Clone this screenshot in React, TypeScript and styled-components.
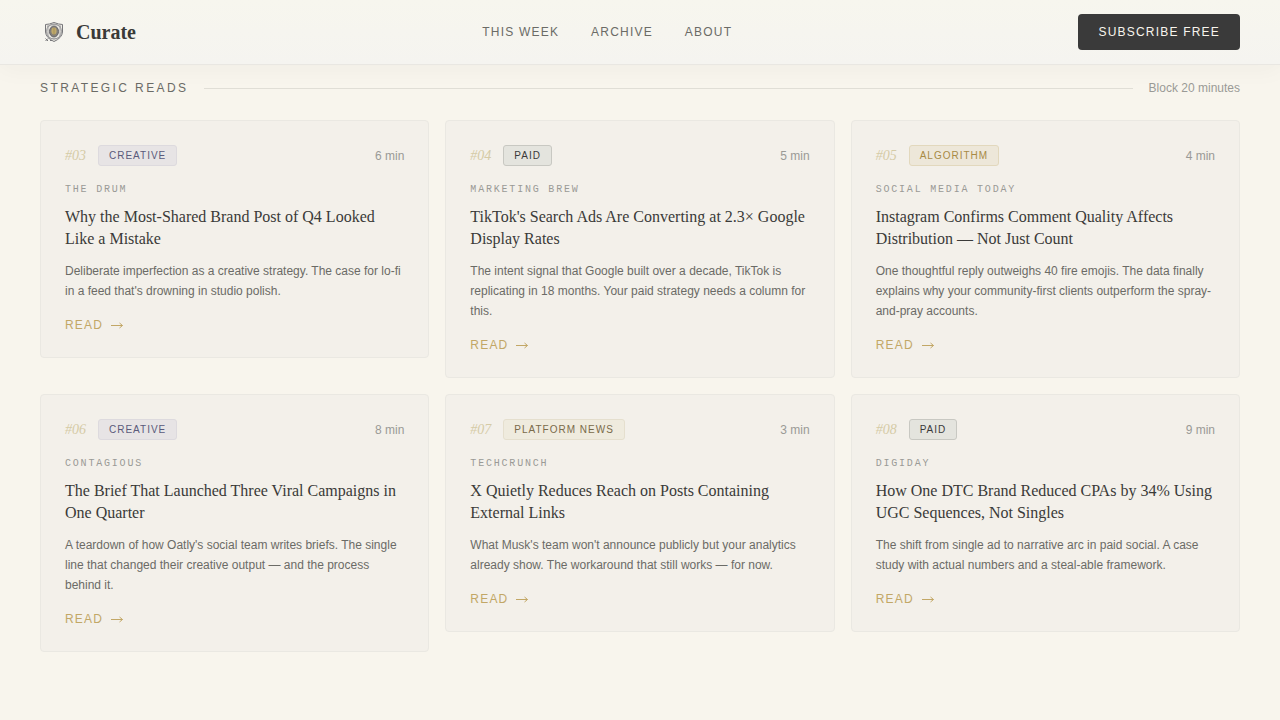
import React from 'react';
import styled, { createGlobalStyle } from 'styled-components';

const sans = '"Liberation Sans", Arial, sans-serif';
const serif = '"Liberation Serif", "Times New Roman", serif';
const mono = '"Liberation Mono", "Courier New", monospace';

const GlobalStyle = createGlobalStyle`
  *, *::before, *::after { box-sizing: border-box; }
  body {
    margin: 0;
    background: #f8f5ed;
    color: #3a3a3a;
    font-family: ${sans};
  }
  h1, h2, h3, p { margin: 0; }
`;

const Header = styled.header`
  position: sticky;
  top: 0;
  z-index: 1;
  display: flex;
  align-items: center;
  justify-content: space-between;
  padding: 14px 40px;
  background: linear-gradient(180deg, #f7f6ee, #f5f4f0);
  border-bottom: 1px solid #e9e7e2;
  box-shadow: 0 4px 24px rgba(58, 58, 58, 0.04);
`;

const Brand = styled.a`
  display: flex;
  align-items: center;
  gap: 8px;
  color: #3a3a38;
  font: bold 20px/28px ${serif};
  text-decoration: none;
`;

const Emblem = styled.svg`
  width: 28px;
  height: 28px;
`;

const Nav = styled.nav`
  display: flex;
  gap: 32px;
`;

const NavLink = styled.a`
  color: #6b6b66;
  font-size: 12px;
  line-height: 16px;
  letter-spacing: 0.1em;
  text-transform: uppercase;
  text-decoration: none;
`;

const SubscribeButton = styled.button`
  padding: 10px 20px;
  border: 0;
  border-radius: 4px;
  background: #3a3a3a;
  color: #f8f5ed;
  font: 12px/16px ${sans};
  letter-spacing: 0.1em;
  text-transform: uppercase;
  cursor: pointer;
`;

const Section = styled.main`
  padding: 15px 40px 64px;
`;

const SectionHeader = styled.div`
  display: flex;
  align-items: center;
  gap: 16px;
  margin-bottom: 24px;
`;

const SectionTitle = styled.h2`
  color: #6b6b66;
  font-size: 12px;
  font-weight: 400;
  line-height: 16px;
  letter-spacing: 0.2em;
  text-transform: uppercase;
`;

const Rule = styled.div`
  flex: 1;
  height: 1px;
  background: #e0ded6;
`;

const Muted = styled.span`
  color: #9a9a96;
  font-size: 12px;
  line-height: 16px;
`;

const Grid = styled.div`
  display: grid;
  grid-template-columns: repeat(3, minmax(0, 1fr));
  align-items: start;
  gap: 16px;
`;

const Card = styled.article`
  padding: 24px;
  background: #f3f0ea;
  border: 1px solid #eae8e2;
  border-radius: 4px;
`;

const CardMeta = styled.div`
  display: flex;
  align-items: center;
  gap: 12px;
  margin-bottom: 16px;
`;

const Rank = styled.span`
  color: #d5cba6;
  font: italic 14px/20px ${serif};
`;

type Tone = 'creative' | 'paid' | 'algorithm' | 'platform';

const tones: Record<Tone, { text: string; fill: string; edge: string }> = {
  creative: { text: '#5a5a7a', fill: '#e7e4e5', edge: '#dddade' },
  paid: { text: '#3a3a3a', fill: '#e4e4de', edge: '#c8c8c2' },
  algorithm: { text: '#a88a45', fill: '#ede7d9', edge: '#e2d8bd' },
  platform: { text: '#7a6a4a', fill: '#efebde', edge: '#e5dfce' },
};

const Badge = styled.span<{ $tone: Tone }>`
  padding: 2px 10px;
  border: 1px solid ${(p) => tones[p.$tone].edge};
  border-radius: 3px;
  background: ${(p) => tones[p.$tone].fill};
  color: ${(p) => tones[p.$tone].text};
  font-size: 10px;
  line-height: 15px;
  letter-spacing: 0.1em;
  text-transform: uppercase;
`;

const Duration = styled(Muted)`
  margin-left: auto;
`;

const Source = styled.p`
  margin-bottom: 8px;
  color: #9a9a96;
  font: 10px/16px ${mono};
  letter-spacing: 0.18em;
  text-transform: uppercase;
`;

const Title = styled.h3`
  margin-bottom: 11px;
  color: #3a3a38;
  font: 400 16px/22px ${serif};
`;

const Summary = styled.p`
  margin-bottom: 16px;
  color: #6b6b66;
  font-size: 12px;
  line-height: 20px;
`;

const ReadLink = styled.a`
  display: flex;
  align-items: center;
  gap: 8px;
  color: #c2a766;
  font-size: 12px;
  line-height: 16px;
  letter-spacing: 0.1em;
  text-transform: uppercase;
  text-decoration: none;
`;

const ArrowIcon = styled.svg`
  width: 12px;
  height: 8px;
`;

interface Article {
  rank: string;
  tone: Tone;
  tag: string;
  minutes: number;
  source: string;
  title: string;
  summary: string;
}

const articles: Article[] = [
  {
    rank: '#03', tone: 'creative', tag: 'Creative', minutes: 6, source: 'The Drum',
    title: 'Why the Most-Shared Brand Post of Q4 Looked Like a Mistake',
    summary: "Deliberate imperfection as a creative strategy. The case for lo-fi in a feed that's drowning in studio polish.",
  },
  {
    rank: '#04', tone: 'paid', tag: 'Paid', minutes: 5, source: 'Marketing Brew',
    title: "TikTok's Search Ads Are Converting at 2.3× Google Display Rates",
    summary: 'The intent signal that Google built over a decade, TikTok is replicating in 18 months. Your paid strategy needs a column for this.',
  },
  {
    rank: '#05', tone: 'algorithm', tag: 'Algorithm', minutes: 4, source: 'Social Media Today',
    title: 'Instagram Confirms Comment Quality Affects Distribution — Not Just Count',
    summary: 'One thoughtful reply outweighs 40 fire emojis. The data finally explains why your community-first clients outperform the spray-and-pray accounts.',
  },
  {
    rank: '#06', tone: 'creative', tag: 'Creative', minutes: 8, source: 'Contagious',
    title: 'The Brief That Launched Three Viral Campaigns in One Quarter',
    summary: "A teardown of how Oatly's social team writes briefs. The single line that changed their creative output — and the process behind it.",
  },
  {
    rank: '#07', tone: 'platform', tag: 'Platform News', minutes: 3, source: 'TechCrunch',
    title: 'X Quietly Reduces Reach on Posts Containing External Links',
    summary: "What Musk's team won't announce publicly but your analytics already show. The workaround that still works — for now.",
  },
  {
    rank: '#08', tone: 'paid', tag: 'Paid', minutes: 9, source: 'Digiday',
    title: 'How One DTC Brand Reduced CPAs by 34% Using UGC Sequences, Not Singles',
    summary: 'The shift from single ad to narrative arc in paid social. A case study with actual numbers and a steal-able framework.',
  },
];

function Logo() {
  return (
    <Emblem viewBox="0 0 28 28" fill="none" aria-hidden="true">
      <path d="M5.5 6.5Q9 6.5 14 4.5Q19 6.5 22.5 6.5V14Q22 20 14 23.5Q6 20 5.5 14Z" fill="#eeece5" stroke="#77777a" />
      <circle cx="14" cy="13.5" r="7.5" stroke="#98989a" />
      <path d="M7 9Q14 4 21 9M7 18Q14 24 21 18M8 7V19M20 7V19" stroke="#9a9a9c" strokeWidth="0.8" />
      <ellipse cx="14" cy="13.5" rx="4.5" ry="5.5" fill="#85817a" stroke="#66666a" />
      <ellipse cx="14" cy="13" rx="2.6" ry="3.4" fill="#c0aa6c" />
      <path d="M14 10V17" stroke="#94834f" strokeWidth="0.6" />
      <path d="M5.5 20.5L8 23M8 20.5L5.5 23M10 22.5H12" stroke="#77777a" />
    </Emblem>
  );
}

function Arrow() {
  return (
    <ArrowIcon viewBox="0 0 12 8" fill="none" stroke="currentColor" aria-hidden="true">
      <path d="M0 4.5H11.5M8.5 2L11.5 4.5L8.5 7" />
    </ArrowIcon>
  );
}

function ArticleCard({ article }: { article: Article }) {
  return (
    <Card>
      <CardMeta>
        <Rank>{article.rank}</Rank>
        <Badge $tone={article.tone}>{article.tag}</Badge>
        <Duration>{article.minutes} min</Duration>
      </CardMeta>
      <Source>{article.source}</Source>
      <Title>{article.title}</Title>
      <Summary>{article.summary}</Summary>
      <ReadLink href="#">
        Read <Arrow />
      </ReadLink>
    </Card>
  );
}

export default function App() {
  return (
    <>
      <GlobalStyle />
      <Header>
        <Brand href="#"><Logo />Curate</Brand>
        <Nav>
          <NavLink href="#">This Week</NavLink>
          <NavLink href="#">Archive</NavLink>
          <NavLink href="#">About</NavLink>
        </Nav>
        <SubscribeButton type="button">Subscribe Free</SubscribeButton>
      </Header>
      <Section>
        <SectionHeader>
          <SectionTitle>Strategic Reads</SectionTitle>
          <Rule />
          <Muted>Block 20 minutes</Muted>
        </SectionHeader>
        <Grid>
          {articles.map((article) => (
            <ArticleCard key={article.rank} article={article} />
          ))}
        </Grid>
      </Section>
    </>
  );
}
